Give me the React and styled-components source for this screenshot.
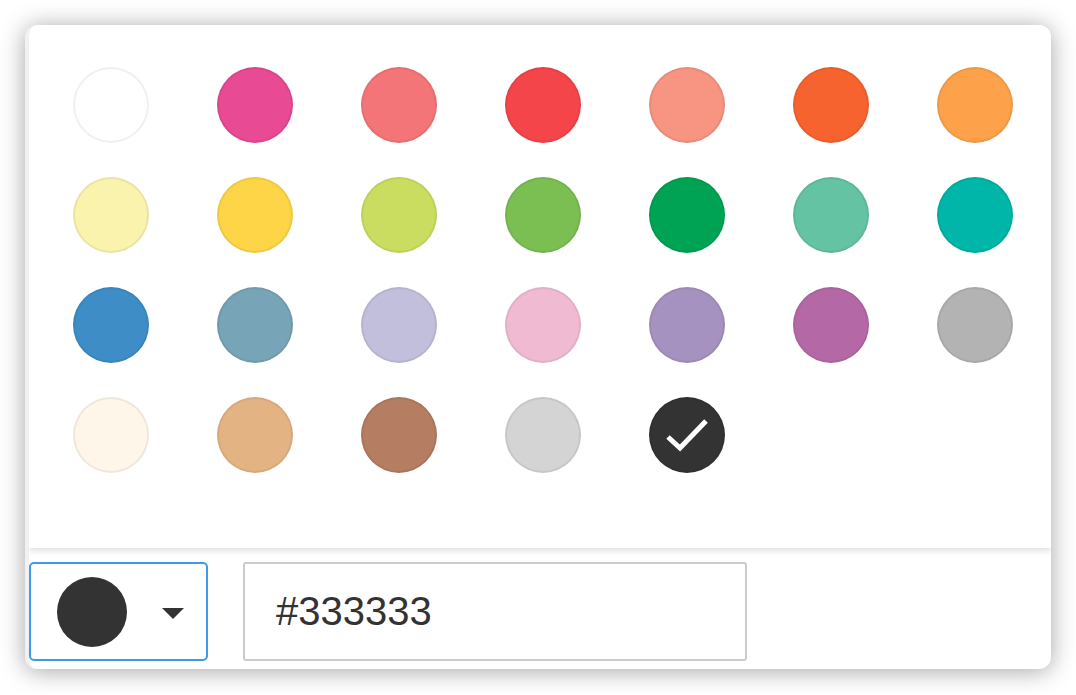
import React, { useState } from "react"
import styled, { createGlobalStyle } from "styled-components"

const colors = [
   "#ffffff", "#e84a93", "#f47578", "#f4454b", "#f79482", "#f6632e", "#fda14a",
   "#f9f3ae", "#fed547", "#cbdd60", "#7bbf52", "#00a354", "#64c3a2", "#00b6a8",
   "#3e8dc7", "#77a4b6", "#c1bfdc", "#f0bad3", "#a592c0", "#b469a6", "#b3b3b3",
   "#fef6e9", "#e4b384", "#b57d62", "#d4d4d4", "#333333",
]

function App() {
   const [selected, setSelected] = useState("#333333")
   return (
      <>
         <GlobalStyle />
         <Card>
            <Palette>
               {colors.map((c) => (
                  <Swatch key={c} color={c} onClick={() => setSelected(c)}>
                     {selected === c && (
                        <svg width="48" height="48" viewBox="0 0 48 48">
                           <polyline
                              points="5,26 17,37 43,10"
                              fill="none"
                              stroke="#fff"
                              strokeWidth="5"
                              strokeLinecap="butt"
                           />
                        </svg>
                     )}
                  </Swatch>
               ))}
            </Palette>
            <Footer>
               <PickerButton>
                  <Dot color={selected} />
                  <Caret />
               </PickerButton>
               <HexInput value={selected} readOnly />
            </Footer>
         </Card>
      </>
   )
}
export default App

const GlobalStyle = createGlobalStyle`
   body {
      margin: 0;
      background: #ffffff;
      font-family: "Liberation Sans", Arial, sans-serif;
   }
`
const Card = styled.div`
   margin: 25px;
   width: 1026px;
   height: 644px;
   box-sizing: border-box;
   background: #ffffff;
   border-radius: 12px;
   box-shadow: 0 2px 24px rgba(0, 0, 0, 0.36);
   overflow: hidden;
   display: flex;
   flex-direction: column;
   border-left: 4px solid #f1f1f1;
`
const Palette = styled.div`
   height: 523px;
   box-sizing: border-box;
   background: #ffffff;
   padding: 25px 0 0 10px;
   display: grid;
   grid-template-columns: repeat(7, 144px);
   grid-auto-rows: 110px;
   align-content: start;
   box-shadow: 0 3px 6px rgba(0, 0, 0, 0.12);
   position: relative;
   z-index: 1;
`
const Swatch = styled.div`
   justify-self: center;
   align-self: center;
   width: 76px;
   height: 76px;
   box-sizing: border-box;
   border-radius: 50%;
   background: ${(p) => p.color};
   border: 2px solid rgba(0, 0, 0, 0.06);
   display: flex;
   align-items: center;
   justify-content: center;
   cursor: pointer;
`
const Footer = styled.div`
   flex: 1;
   display: flex;
   align-items: flex-start;
   gap: 35px;
   padding-top: 14px;
`
const PickerButton = styled.div`
   width: 179px;
   height: 99px;
   box-sizing: border-box;
   border: 2px solid #3d9be9;
   border-radius: 5px;
   display: flex;
   align-items: center;
   padding-left: 26px;
   gap: 35px;
`
const Dot = styled.div`
   width: 70px;
   height: 70px;
   border-radius: 50%;
   background: ${(p) => p.color};
`
const Caret = styled.div`
   width: 0;
   height: 0;
   border-left: 11px solid transparent;
   border-right: 11px solid transparent;
   border-top: 11px solid #333333;
   margin-top: 4px;
`
const HexInput = styled.input`
   width: 504px;
   height: 99px;
   box-sizing: border-box;
   border: 2px solid #cccccc;
   border-radius: 3px;
   padding: 0 0 0 31px;
   font-family: "Liberation Sans", Arial, sans-serif;
   font-size: 40px;
   color: #333333;
   outline: none;
`
